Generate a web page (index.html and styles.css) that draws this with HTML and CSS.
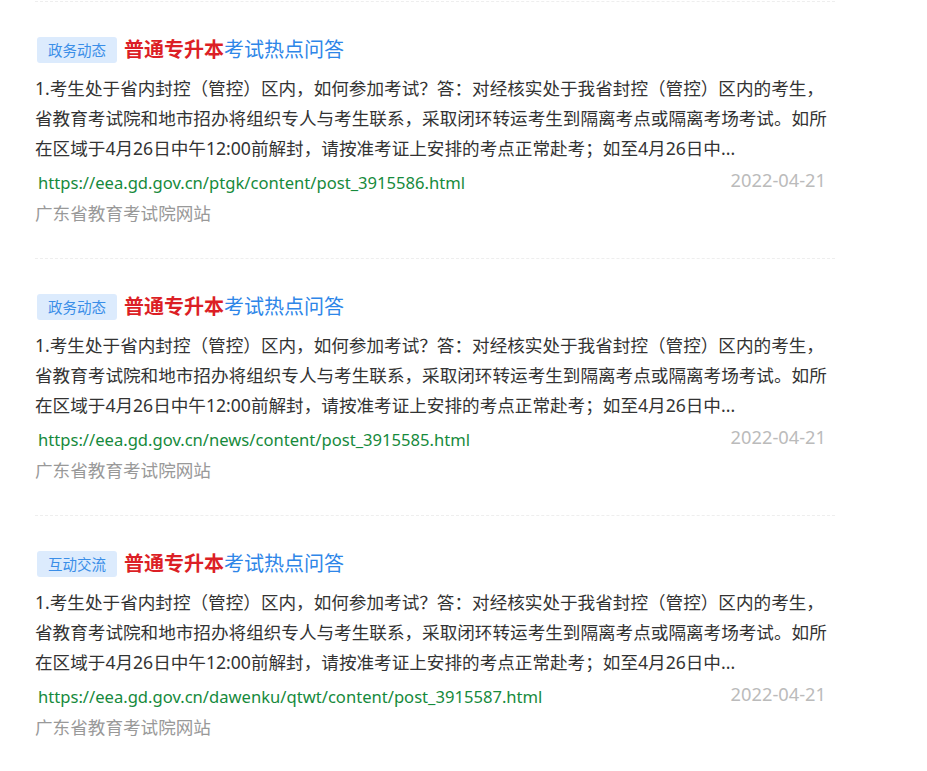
FILE: index.html
```html
<!DOCTYPE html>
<html lang="zh-CN">
<head>
  <meta charset="UTF-8">
  <meta name="viewport" content="width=device-width, initial-scale=1.0">
  <title>搜索结果</title>
  <link rel="stylesheet" href="styles.css">
</head>
<body>
  <div class="list">
    <div class="item">
      <div class="head">
        <span class="tag">政务动态</span>
        <a class="title" href="#"><em>普通专升本</em>考试热点问答</a>
      </div>
      <p class="summary">1.考生处于省内封控（管控）区内，如何参加考试？答：对经核实处于我省封控（管控）区内的考生，省教育考试院和地市招办将组织专人与考生联系，采取闭环转运考生到隔离考点或隔离考场考试。如所在区域于4月26日中午12:00前解封，请按准考证上安排的考点正常赴考；如至4月26日中...</p>
      <div class="meta">
        <span class="url">https://eea.gd.gov.cn/ptgk/content/post_3915586.html</span>
        <span class="date">2022-04-21</span>
      </div>
      <div class="source">广东省教育考试院网站</div>
    </div>

    <div class="item">
      <div class="head">
        <span class="tag">政务动态</span>
        <a class="title" href="#"><em>普通专升本</em>考试热点问答</a>
      </div>
      <p class="summary">1.考生处于省内封控（管控）区内，如何参加考试？答：对经核实处于我省封控（管控）区内的考生，省教育考试院和地市招办将组织专人与考生联系，采取闭环转运考生到隔离考点或隔离考场考试。如所在区域于4月26日中午12:00前解封，请按准考证上安排的考点正常赴考；如至4月26日中...</p>
      <div class="meta">
        <span class="url">https://eea.gd.gov.cn/news/content/post_3915585.html</span>
        <span class="date">2022-04-21</span>
      </div>
      <div class="source">广东省教育考试院网站</div>
    </div>

    <div class="item">
      <div class="head">
        <span class="tag">互动交流</span>
        <a class="title" href="#"><em>普通专升本</em>考试热点问答</a>
      </div>
      <p class="summary">1.考生处于省内封控（管控）区内，如何参加考试？答：对经核实处于我省封控（管控）区内的考生，省教育考试院和地市招办将组织专人与考生联系，采取闭环转运考生到隔离考点或隔离考场考试。如所在区域于4月26日中午12:00前解封，请按准考证上安排的考点正常赴考；如至4月26日中...</p>
      <div class="meta">
        <span class="url">https://eea.gd.gov.cn/dawenku/qtwt/content/post_3915587.html</span>
        <span class="date">2022-04-21</span>
      </div>
      <div class="source">广东省教育考试院网站</div>
    </div>
  </div>
</body>
</html>
```

FILE: styles.css
```css
body {
  margin: 0;
  padding: 1px 0 0 35px;
  font-family: "Microsoft YaHei", "Noto Sans", "Noto Sans CJK SC", sans-serif;
  color: #333;
  background: #fff;
}
.list {
  width: 800px;
  border-top: 1px dashed #eee;
}
.item {
  padding: 35px 0 30px;
  border-bottom: 1px dashed #eee;
}
.head {
  display: flex;
  align-items: center;
  gap: 7px;
  height: 26px;
  margin-left: 2px;
}
.tag {
  display: inline-block;
  height: 26px;
  line-height: 26px;
  padding: 0 11px;
  font-size: 14.5px;
  color: #3a8ee8;
  background: #dcebfd;
  border-radius: 3px;
}
.title {
  font-size: 20px;
  line-height: 28px;
  color: #2e86e8;
  text-decoration: none;
}
.title em {
  font-style: normal;
  font-weight: bold;
  color: #dc1f26;
}
.summary {
  margin: 10px 0 0;
  font-size: 17.6px;
  line-height: 30px;
  color: #333;
}
.meta {
  display: flex;
  justify-content: space-between;
  align-items: flex-start;
  margin-top: 5px;
  padding: 0 9px 0 3px;
}
.url {
  font-size: 16.6px;
  line-height: 30px;
  color: #168a3c;
}
.date {
  font-size: 18.3px;
  line-height: 24px;
  color: #bbb;
}
.source {
  font-size: 17.6px;
  line-height: 30px;
  color: #999;
}
```
